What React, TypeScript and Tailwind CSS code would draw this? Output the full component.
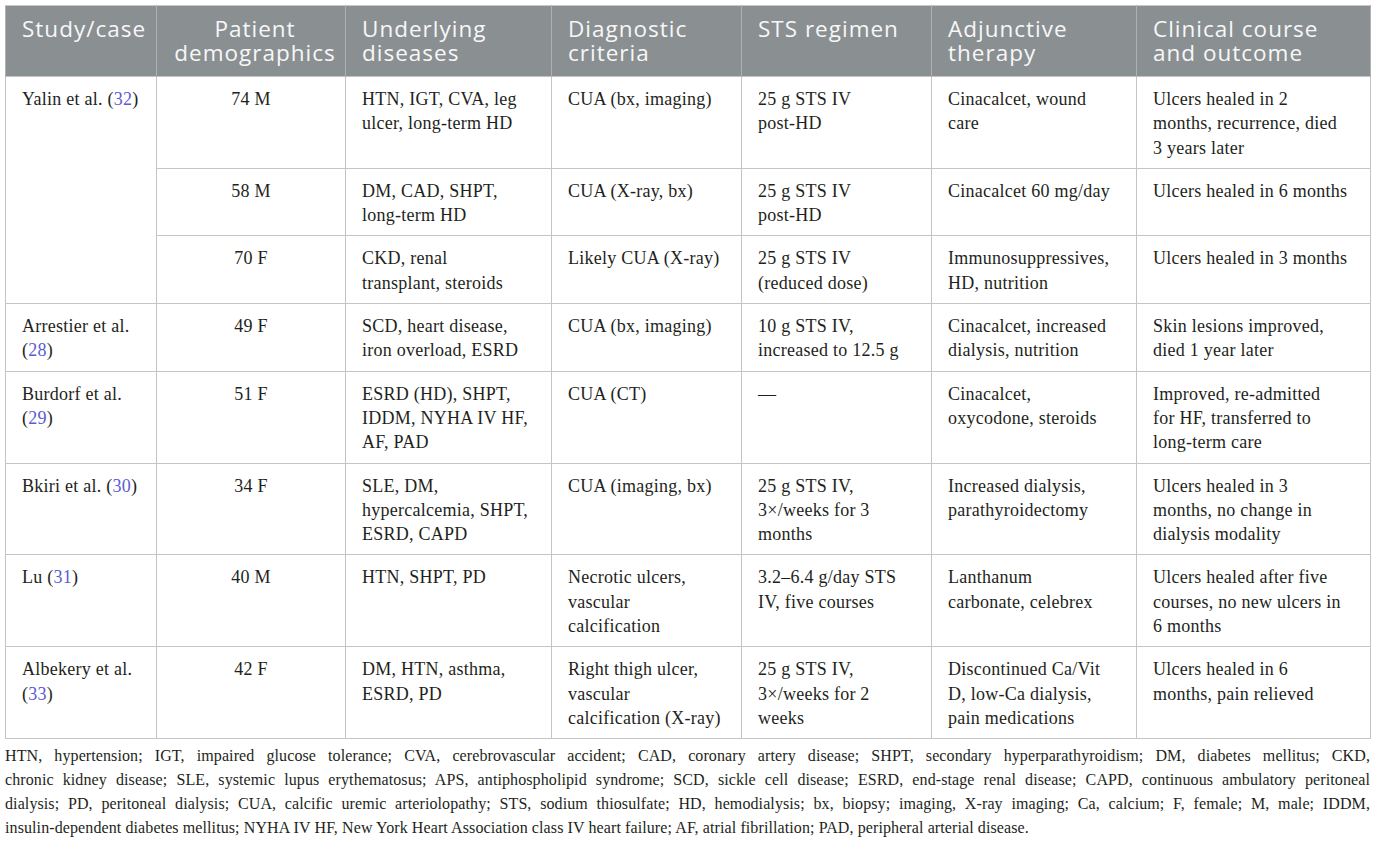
import React from 'react';

type Cell = string[];

interface CaseRow {
  study?: { name: string[]; ref: string };
  span?: number;
  demo: string;
  diseases: Cell;
  criteria: Cell;
  regimen: Cell;
  therapy: Cell;
  outcome: Cell;
}

const rows: CaseRow[] = [
  {
    study: { name: ['Yalin et al. '], ref: '32' },
    span: 3,
    demo: '74 M',
    diseases: ['HTN, IGT, CVA, leg', 'ulcer, long-term HD'],
    criteria: ['CUA (bx, imaging)'],
    regimen: ['25 g STS IV', 'post-HD'],
    therapy: ['Cinacalcet, wound', 'care'],
    outcome: ['Ulcers healed in 2', 'months, recurrence, died', '3 years later'],
  },
  {
    demo: '58 M',
    diseases: ['DM, CAD, SHPT,', 'long-term HD'],
    criteria: ['CUA (X-ray, bx)'],
    regimen: ['25 g STS IV', 'post-HD'],
    therapy: ['Cinacalcet 60 mg/day'],
    outcome: ['Ulcers healed in 6 months'],
  },
  {
    demo: '70 F',
    diseases: ['CKD, renal', 'transplant, steroids'],
    criteria: ['Likely CUA (X-ray)'],
    regimen: ['25 g STS IV', '(reduced dose)'],
    therapy: ['Immunosuppressives,', 'HD, nutrition'],
    outcome: ['Ulcers healed in 3 months'],
  },
  {
    study: { name: ['Arrestier et al.', ''], ref: '28' },
    demo: '49 F',
    diseases: ['SCD, heart disease,', 'iron overload, ESRD'],
    criteria: ['CUA (bx, imaging)'],
    regimen: ['10 g STS IV,', 'increased to 12.5 g'],
    therapy: ['Cinacalcet, increased', 'dialysis, nutrition'],
    outcome: ['Skin lesions improved,', 'died 1 year later'],
  },
  {
    study: { name: ['Burdorf et al.', ''], ref: '29' },
    demo: '51 F',
    diseases: ['ESRD (HD), SHPT,', 'IDDM, NYHA IV HF,', 'AF, PAD'],
    criteria: ['CUA (CT)'],
    regimen: ['—'],
    therapy: ['Cinacalcet,', 'oxycodone, steroids'],
    outcome: ['Improved, re-admitted', 'for HF, transferred to', 'long-term care'],
  },
  {
    study: { name: ['Bkiri et al. '], ref: '30' },
    demo: '34 F',
    diseases: ['SLE, DM,', 'hypercalcemia, SHPT,', 'ESRD, CAPD'],
    criteria: ['CUA (imaging, bx)'],
    regimen: ['25 g STS IV,', '3×/weeks for 3', 'months'],
    therapy: ['Increased dialysis,', 'parathyroidectomy'],
    outcome: ['Ulcers healed in 3', 'months, no change in', 'dialysis modality'],
  },
  {
    study: { name: ['Lu '], ref: '31' },
    demo: '40 M',
    diseases: ['HTN, SHPT, PD'],
    criteria: ['Necrotic ulcers,', 'vascular', 'calcification'],
    regimen: ['3.2–6.4 g/day STS', 'IV, five courses'],
    therapy: ['Lanthanum', 'carbonate, celebrex'],
    outcome: ['Ulcers healed after five', 'courses, no new ulcers in', '6 months'],
  },
  {
    study: { name: ['Albekery et al.', ''], ref: '33' },
    demo: '42 F',
    diseases: ['DM, HTN, asthma,', 'ESRD, PD'],
    criteria: ['Right thigh ulcer,', 'vascular', 'calcification (X-ray)'],
    regimen: ['25 g STS IV,', '3×/weeks for 2', 'weeks'],
    therapy: ['Discontinued Ca/Vit', 'D, low-Ca dialysis,', 'pain medications'],
    outcome: ['Ulcers healed in 6', 'months, pain relieved'],
  },
];

const headers: { lines: string[]; center?: boolean }[] = [
  { lines: ['Study/case'] },
  { lines: ['Patient', 'demographics'], center: true },
  { lines: ['Underlying', 'diseases'] },
  { lines: ['Diagnostic', 'criteria'] },
  { lines: ['STS regimen'] },
  { lines: ['Adjunctive', 'therapy'] },
  { lines: ['Clinical course', 'and outcome'] },
];

const footnote = [
  'HTN, hypertension; IGT, impaired glucose tolerance; CVA, cerebrovascular accident; CAD, coronary artery disease; SHPT, secondary hyperparathyroidism; DM, diabetes mellitus; CKD,',
  'chronic kidney disease; SLE, systemic lupus erythematosus; APS, antiphospholipid syndrome; SCD, sickle cell disease; ESRD, end-stage renal disease; CAPD, continuous ambulatory peritoneal',
  'dialysis; PD, peritoneal dialysis; CUA, calcific uremic arteriolopathy; STS, sodium thiosulfate; HD, hemodialysis; bx, biopsy; imaging, X-ray imaging; Ca, calcium; F, female; M, male; IDDM,',
  'insulin-dependent diabetes mellitus; NYHA IV HF, New York Heart Association class IV heart failure; AF, atrial fibrillation; PAD, peripheral arterial disease.',
];

const tdClass =
  'border border-[#c4c4c4] pl-4 pr-2 pt-[10px] pb-2 align-top text-left whitespace-nowrap';

const Lines: React.FC<{ lines: string[] }> = ({ lines }) => (
  <>
    {lines.map((l, i) => (
      <span key={i} className="block">
        {l}
      </span>
    ))}
  </>
);

const Ref: React.FC<{ n: string }> = ({ n }) => (
  <>
    (<span className="text-[#5b5bd6]">{n}</span>)
  </>
);

const App: React.FC = () => {
  return (
    <div className="min-h-screen bg-white pl-[5px] pt-[5px]">
      <div className="w-[1365px]">
        <table className="w-[1365px] table-fixed border-collapse [font-family:'Liberation_Serif',serif] text-[18px] leading-[24.3px] tracking-[0.25px] text-[#231f20]">
          <colgroup>
            <col className="w-[151px]" />
            <col className="w-[189px]" />
            <col className="w-[206px]" />
            <col className="w-[190px]" />
            <col className="w-[190px]" />
            <col className="w-[205px]" />
            <col className="w-[234px]" />
          </colgroup>
          <thead>
            <tr className="bg-[#8a8f92]">
              {headers.map((h, i) => (
                <th
                  key={i}
                  className={`border-x border-[#adb1b3] border-t border-t-[#c8c8c8] pl-4 pr-2 pt-[11px] pb-[12px] align-top [font-family:'Open_Sans',sans-serif] text-[22.5px] leading-[23.5px] font-normal tracking-[1px] text-[#f7f7f7] whitespace-nowrap ${
                    h.center ? 'text-center pl-2' : 'text-left'
                  }`}
                >
                  <Lines lines={h.lines} />
                </th>
              ))}
            </tr>
          </thead>
          <tbody>
            {rows.map((r, i) => (
              <tr key={i}>
                {r.study && (
                  <td className={tdClass} rowSpan={r.span ?? 1}>
                    {r.study.name.length > 1 ? (
                      <>
                        <span className="block">{r.study.name[0]}</span>
                        <span className="block">
                          <Ref n={r.study.ref} />
                        </span>
                      </>
                    ) : (
                      <span className="block">
                        {r.study.name[0]}
                        <Ref n={r.study.ref} />
                      </span>
                    )}
                  </td>
                )}
                <td className="border border-[#c4c4c4] px-2 pt-[10px] pb-2 align-top text-center whitespace-nowrap">
                  {r.demo}
                </td>
                <td className={tdClass}>
                  <Lines lines={r.diseases} />
                </td>
                <td className={tdClass}>
                  <Lines lines={r.criteria} />
                </td>
                <td className={tdClass}>
                  <Lines lines={r.regimen} />
                </td>
                <td className={tdClass}>
                  <Lines lines={r.therapy} />
                </td>
                <td className={tdClass}>
                  <Lines lines={r.outcome} />
                </td>
              </tr>
            ))}
          </tbody>
        </table>

        {/* Footnote */}
        <div className="mt-[5px] [font-family:'Liberation_Serif',serif] text-[16px] leading-[24px] tracking-[0.1px] text-[#231f20]">
          {footnote.map((line, i) => (
            <span
              key={i}
              className={`block whitespace-nowrap ${
                i < footnote.length - 1 ? 'text-justify [text-align-last:justify]' : 'text-left'
              }`}
            >
              {line}
            </span>
          ))}
        </div>
      </div>
    </div>
  );
};

export default App;
